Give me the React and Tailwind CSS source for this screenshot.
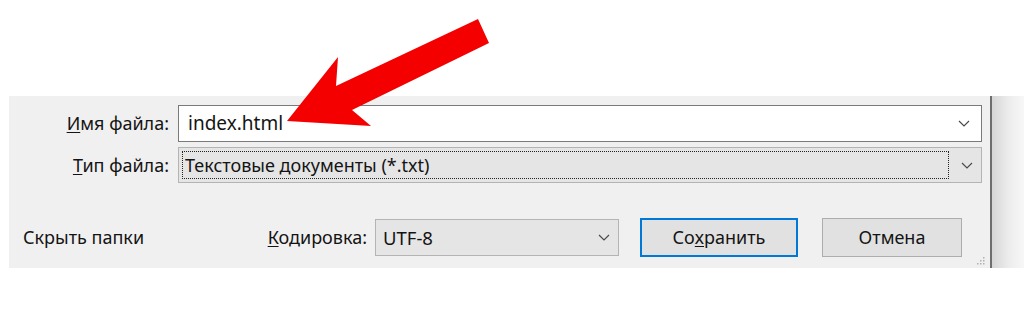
import React from 'react';

const Chevron = ({ className = '' }) => (
  <svg width="12" height="7" viewBox="0 0 12 7" className={className}>
    <path d="M1 1l5 5 5-5" fill="none" stroke="#4a4a4a" strokeWidth="1.2" />
  </svg>
);

const Arrow = () => (
  <svg
    className="absolute left-0 top-0 pointer-events-none"
    width="1024"
    height="326"
    viewBox="0 0 1024 326"
  >
    <polygon
      points="478,19 489,43 352,110 371,126 287,121 338,57 336,86"
      fill="#f40000"
    />
  </svg>
);

const App = () => {
  return (
    <div
      className="relative w-[1024px] h-[326px] bg-white text-[#141414] overflow-hidden"
      style={{ fontFamily: '"Noto Sans", "Open Sans", sans-serif' }}
    >
      <div className="h-[96px]" />
      <div className="flex h-[172px]">
        <div className="relative ml-[9px] w-[981px] bg-[#f0f0f0] text-[18px]">
          {/* file name */}
          <div className="flex items-center mt-[9px] h-[37px]">
            <div className="w-[160px] text-right">
              <span className="underline underline-offset-2">И</span>мя файла:
            </div>
            <div className="ml-[9px] w-[804px] h-full bg-white border border-[#7a7a7a] flex items-center justify-between pl-[9px] pr-[11px]">
              <span className="text-[19px]">index.html</span>
              <Chevron />
            </div>
          </div>

          {/* file type */}
          <div className="flex items-center mt-[5px] h-[36px]">
            <div className="w-[160px] text-right">
              <span className="underline underline-offset-2">Т</span>ип файла:
            </div>
            <div className="ml-[9px] w-[804px] h-full bg-[#e5e5e5] border border-[#b4b4b4] flex items-center p-[3px] pr-[8px]">
              <div className="flex-1 h-full border border-dotted border-[#222] flex items-center pl-[2px] text-[18px]">
                Текстовые документы (*.txt)
              </div>
              <Chevron className="ml-[12px]" />
            </div>
          </div>

          {/* bottom row */}
          <div className="flex items-center mt-[35px] h-[39px]">
            <div className="ml-[14px] w-[352px] flex items-center justify-between pr-[8px]">
              <span>Скрыть папки</span>
              <span>
                <span className="underline underline-offset-2">К</span>одировка:
              </span>
            </div>
            <div className="w-[244px] h-[37px] bg-[#e5e5e5] border border-[#b4b4b4] flex items-center justify-between pl-[7px] pr-[8px]">
              <span className="text-[18.5px]">UTF-8</span>
              <Chevron />
            </div>
            <button className="ml-[21px] w-[158px] h-[39px] bg-[#e1e1e1] border-2 border-[#0078d7] flex items-center justify-center">
              Со<span className="underline underline-offset-2">х</span>ранить
            </button>
            <button className="ml-[24px] w-[140px] h-[39px] bg-[#e1e1e1] border border-[#adadad] flex items-center justify-center">
              Отмена
            </button>
          </div>

          <svg className="absolute right-[5px] bottom-[3px]" width="8" height="8" viewBox="0 0 8 8">
            <rect x="6" y="0" width="1.5" height="1.5" fill="#b0b0b0" />
            <rect x="3" y="3" width="1.5" height="1.5" fill="#b0b0b0" />
            <rect x="6" y="3" width="1.5" height="1.5" fill="#b0b0b0" />
            <rect x="0" y="6" width="1.5" height="1.5" fill="#b0b0b0" />
            <rect x="3" y="6" width="1.5" height="1.5" fill="#b0b0b0" />
            <rect x="6" y="6" width="1.5" height="1.5" fill="#b0b0b0" />
          </svg>
        </div>
        <div className="w-[2px] bg-[#6e6e6e]" />
        <div className="flex-1 bg-gradient-to-r from-[#d6d6d6] via-[#ececec] to-[#f7f7f7]" />
      </div>
      <Arrow />
    </div>
  );
};

export default App;
